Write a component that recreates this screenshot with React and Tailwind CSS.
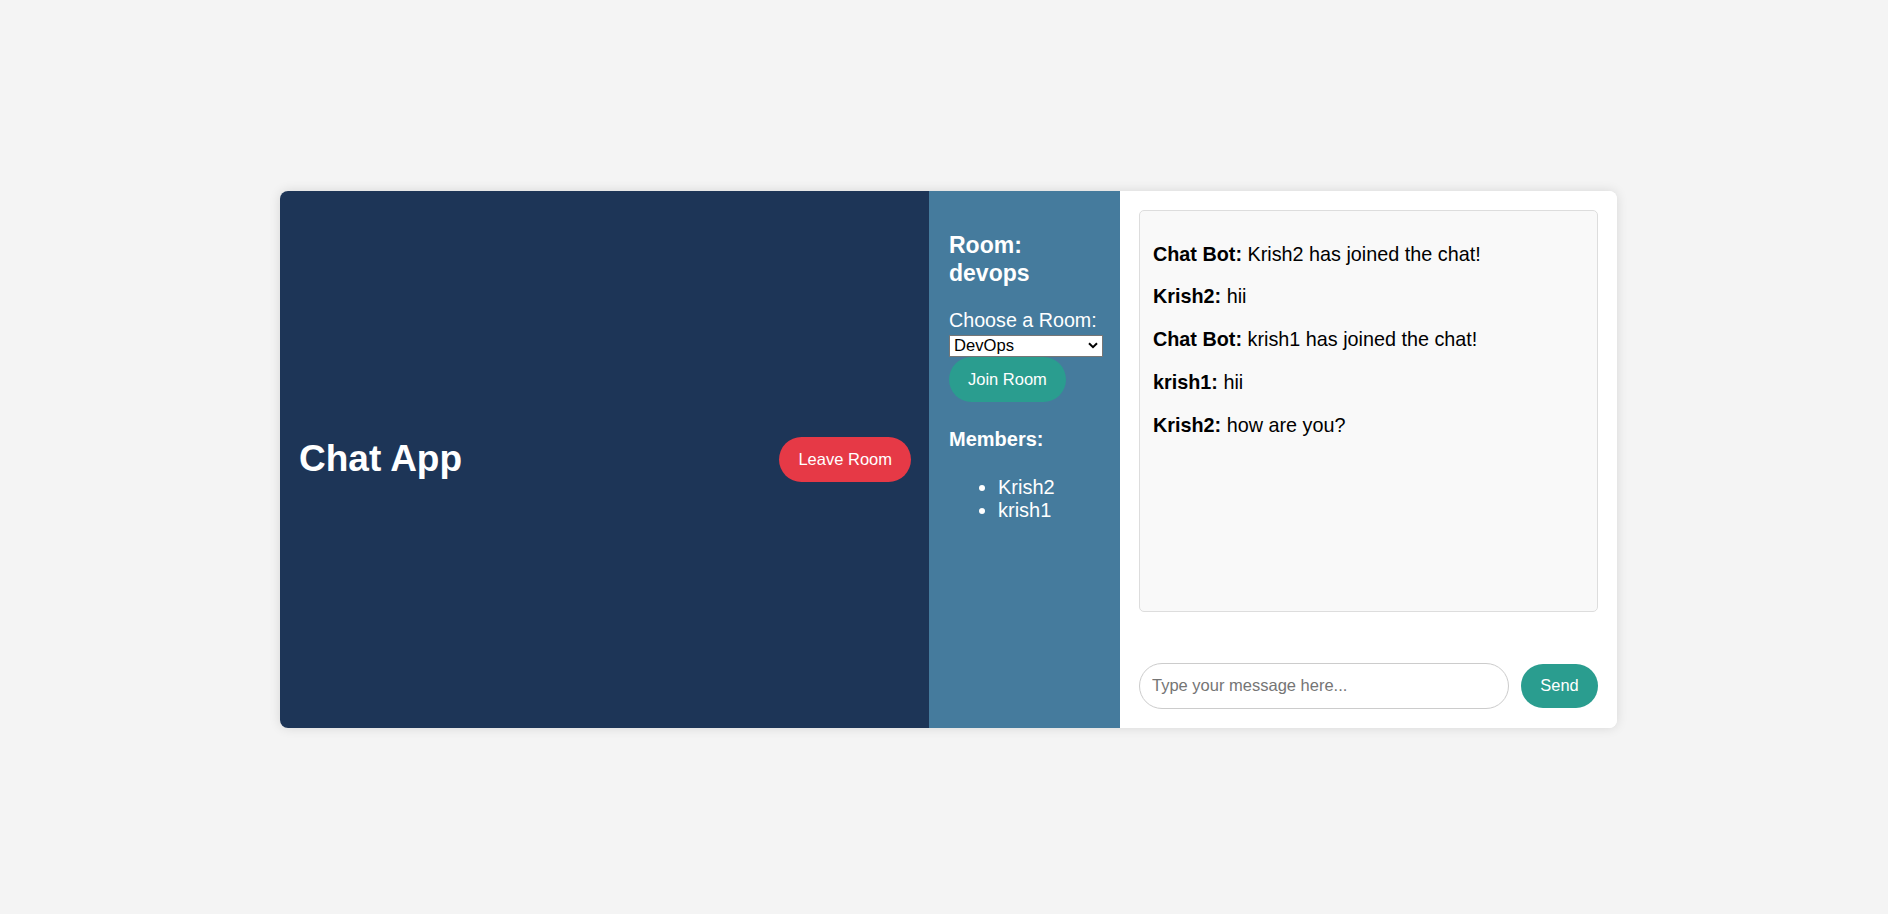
export default function App() {
    const messages = [
        { user: 'Chat Bot', text: 'Krish2 has joined the chat!' },
        { user: 'Krish2', text: 'hii' },
        { user: 'Chat Bot', text: 'krish1 has joined the chat!' },
        { user: 'krish1', text: 'hii' },
        { user: 'Krish2', text: 'how are you?' },
    ];
    const members = ['Krish2', 'krish1'];

    return (
        <div
            className="min-h-screen bg-[#f4f4f4] flex items-center justify-center pl-[9px] pt-[4px]"
            style={{ fontFamily: '"Liberation Sans", Arial, sans-serif' }}
        >
            <div className="flex w-[1337px] h-[537px] rounded-lg overflow-hidden bg-white shadow-[0_0_12px_rgba(0,0,0,0.12)]">
                {/* header / left panel */}
                <div className="w-[649px] bg-[#1d3557] flex items-center justify-between pl-[19px] pr-[18px]">
                    <h1 className="text-[37px] font-bold text-white leading-[42px]">Chat App</h1>
                    <button className="h-[45px] px-[19px] rounded-full bg-[#e63946] text-white text-[16.5px]">
                        Leave Room
                    </button>
                </div>

                {/* sidebar */}
                <div className="w-[191px] bg-[#457b9d] text-white pl-5 pt-[40px]">
                    <h3 className="text-[23px] leading-[28px] font-bold">
                        Room:
                        <br />
                        devops
                    </h3>
                    <div className="mt-[22px] text-[19.7px] leading-[23px]">Choose a Room:</div>
                    <div className="relative mt-[2px] w-[154px] h-[22px]">
                        <select
                            defaultValue="devops"
                            className="appearance-none w-full h-full bg-white text-black border border-[#767676] pl-[4px] text-[16.6px] leading-[20px] rounded-none outline-none"
                        >
                            <option value="javascript">JavaScript</option>
                            <option value="python">Python</option>
                            <option value="devops">DevOps</option>
                        </select>
                        <svg
                            className="absolute right-[5px] top-[8px] pointer-events-none"
                            width="10"
                            height="7"
                            viewBox="0 0 10 7"
                            fill="none"
                        >
                            <path d="M1 1.2 L5 5.2 L9 1.2" stroke="#000" strokeWidth="2" />
                        </svg>
                    </div>
                    <button className="mt-[1px] h-[45px] px-[19px] rounded-full bg-[#2a9d8f] text-white text-[16.5px]">
                        Join Room
                    </button>
                    <h4 className="mt-[26px] text-[20px] leading-[23px] font-bold">Members:</h4>
                    <ul className="mt-[25px] list-disc pl-[49px] text-[20px] leading-[23.3px]">
                        {members.map((m) => (
                            <li key={m}>{m}</li>
                        ))}
                    </ul>
                </div>

                {/* chat */}
                <div className="w-[497px] bg-white p-[19px] flex flex-col">
                    <div className="h-[402px] bg-[#f9f9f9] border border-[#ddd] rounded-[5px] pt-[32px] pl-[13px] flex flex-col gap-[19.8px] text-[19.8px] leading-[23px] text-black">
                        {messages.map((msg, i) => (
                            <p key={i}>
                                <strong>{msg.user}:</strong> {msg.text}
                            </p>
                        ))}
                    </div>
                    <div className="mt-[51px] flex items-center gap-[12px]">
                        <input
                            type="text"
                            placeholder="Type your message here..."
                            className="w-[370px] h-[46px] rounded-full border border-[#ccc] pl-[12px] text-[16.5px] placeholder-[#757575] outline-none"
                        />
                        <button className="w-[77px] h-[44px] rounded-full bg-[#2a9d8f] text-white text-[16.4px]">
                            Send
                        </button>
                    </div>
                </div>
            </div>
        </div>
    );
}
